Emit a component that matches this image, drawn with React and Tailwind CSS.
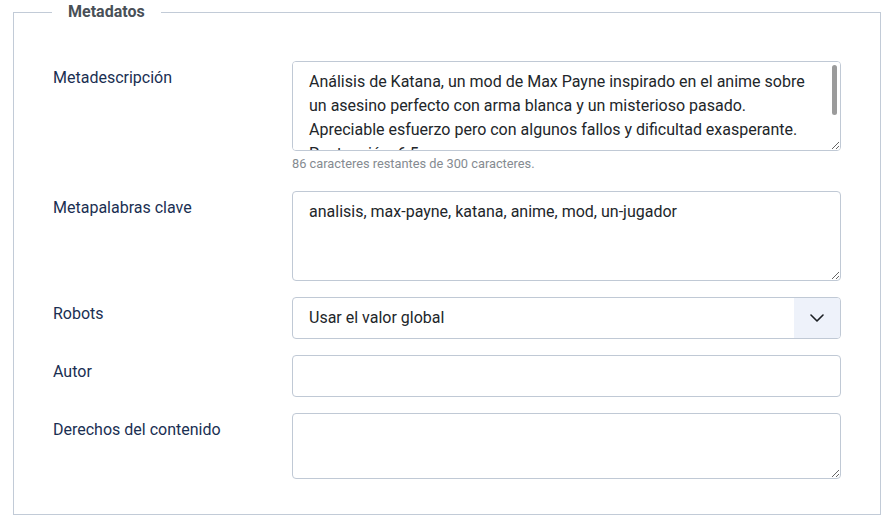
import { useState } from 'react';

const desc =
  'Análisis de Katana, un mod de Max Payne inspirado en el anime sobre un asesino perfecto con arma blanca y un misterioso pasado. Apreciable esfuerzo pero con algunos fallos y dificultad exasperante. Puntuación: 6,5.\n\n ';

function Row({ label, children, className = 'mb-4' }) {
  return (
    <div className={`flex ${className}`}>
      <label className="w-[240px] shrink-0 pt-[5px] pl-px text-base leading-6 text-[#1a2f52]">{label}</label>
      <div className="w-[549px]">{children}</div>
    </div>
  );
}

const field =
  'block w-full rounded-[4px] border border-[#c0c9d5] bg-white px-4 py-2 text-base leading-6 text-[#22262a] outline-none';

export default function App() {
  const [description, setDescription] = useState(desc);
  const [keywords, setKeywords] = useState('analisis, max-payne, katana, anime, mod, un-jugador');
  const [robots, setRobots] = useState('');
  const [author, setAuthor] = useState('');
  const [rights, setRights] = useState('');

  return (
    <div className="h-[528px] w-[895px] bg-white font-['Roboto',sans-serif]">
      <fieldset className="m-0 ml-[13px] w-[868px] min-w-0 border border-[#c2cbd7] px-[38px] pt-[37px] pb-[35px]">
        <legend className="px-4 text-base font-bold leading-6 text-[#495057]">Metadatos</legend>

        {/* descripción, con barra de desplazamiento superpuesta */}
        <Row label="Metadescripción" className="mb-[18px]">
          <div className="relative">
            <textarea
              value={description}
              onChange={e => setDescription(e.target.value)}
              className={`${field} h-[90px] pr-[28px] [scrollbar-width:none]`}
            />
            <div className="pointer-events-none absolute top-[4px] right-[4px] h-[50px] w-[5px] rounded-full bg-[#9b9b9b]" />
          </div>
          <div className="mt-[3px] text-[12.8px] leading-[19px] text-[#858b91]">
            86 caracteres restantes de 300 caracteres.
          </div>
        </Row>

        <Row label="Metapalabras clave">
          <textarea value={keywords} onChange={e => setKeywords(e.target.value)} className={`${field} h-[90px]`} />
        </Row>

        <Row label="Robots">
          <div className="relative">
            <select
              value={robots}
              onChange={e => setRobots(e.target.value)}
              className={`${field} h-[42px] appearance-none pr-14`}
            >
              <option value="">Usar el valor global</option>
              <option value="index, follow">index, follow</option>
              <option value="noindex, follow">noindex, follow</option>
              <option value="index, nofollow">index, nofollow</option>
              <option value="noindex, nofollow">noindex, nofollow</option>
            </select>
            <div className="pointer-events-none absolute top-px right-px bottom-px flex w-[46px] items-center justify-center rounded-r-[3px] bg-[#eef2fa]">
              <svg width="14" height="8" viewBox="0 0 14 8" fill="none">
                <path d="M1 1l6 6 6-6" stroke="#1b1f23" strokeWidth="1.6" strokeLinecap="round" strokeLinejoin="round" />
              </svg>
            </div>
          </div>
        </Row>

        <Row label="Autor">
          <input value={author} onChange={e => setAuthor(e.target.value)} className={`${field} h-[42px]`} />
        </Row>

        <Row label="Derechos del contenido" className="">
          <textarea value={rights} onChange={e => setRights(e.target.value)} className={`${field} h-[66px]`} />
        </Row>
      </fieldset>
    </div>
  );
}
